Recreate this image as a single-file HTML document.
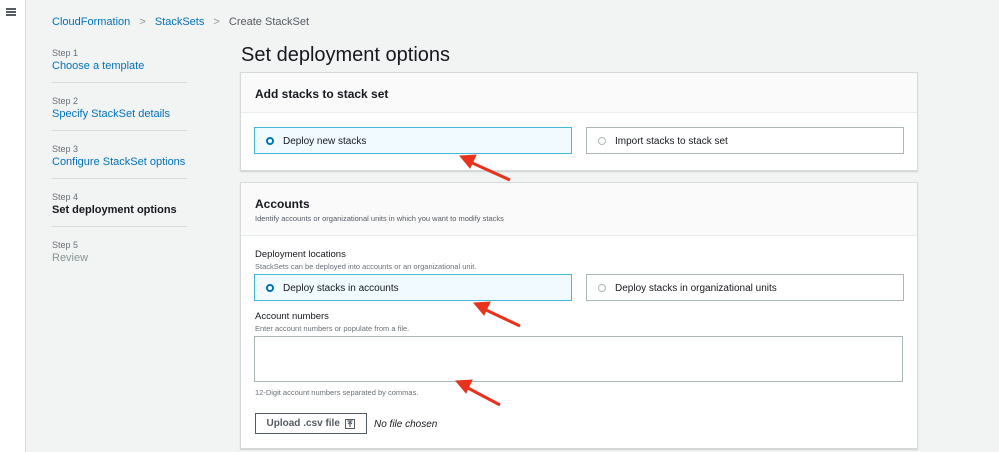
<!DOCTYPE html><html><head><style>
body{margin:0;width:999px;height:452px;background:#f2f3f3;font-family:"Liberation Sans",Arial,sans-serif;position:relative;overflow:hidden;color:#16191f}
.a{position:absolute}
.side{left:0;top:0;width:25px;height:452px;background:#fff;border-right:1px solid #d5dbdb}
.bc{font-size:11px;top:16px;left:52px;color:#0073bb}
.st{left:52px;font-size:9px;color:#687078}
.sl{left:52px;font-size:11px;color:#0073bb}
.hr{left:52px;width:135px;border-top:1px solid #d5dbdb}
.panel{left:240px;width:676px;background:#fff;border:1px solid #d5dbdb;box-shadow:0 1px 1px rgba(0,0,0,.15)}
.ph{background:#fafafa;border-bottom:1px solid #eaeded;position:absolute;left:0;right:0;top:0}
.tile{position:absolute;height:27px;border:1px solid #aab7b8;font-size:10px;box-sizing:border-box;display:flex;align-items:center;padding-left:11px;padding-top:2px}
.tile.on{background:#f1faff;border-color:#44b9d6}
.r{width:8px;height:8px;border-radius:50%;border:1px solid #aab7b8;margin-right:9px;box-sizing:border-box;margin-top:-2px}
.on .r{border:2.5px solid #0073bb;background:#fff}
</style></head><body>
<div class="a side"></div>
<div class="a" style="left:6px;top:8px;width:10px;height:2px;background:#545b64;box-shadow:0 3px 0 #545b64,0 6px 0 #545b64"></div>
<div class="a bc">CloudFormation <span style="color:#879596;margin:0 6px">&gt;</span> StackSets <span style="color:#879596;margin:0 6px">&gt;</span> <span style="color:#545b64">Create StackSet</span></div>
<div class="a st" style="top:48px">Step 1</div><div class="a sl" style="top:60px">Choose a template</div><div class="a hr" style="top:82px"></div>
<div class="a st" style="top:96px">Step 2</div><div class="a sl" style="top:108px">Specify StackSet details</div><div class="a hr" style="top:130px"></div>
<div class="a st" style="top:144px">Step 3</div><div class="a sl" style="top:156px">Configure StackSet options</div><div class="a hr" style="top:178px"></div>
<div class="a st" style="top:192px">Step 4</div><div class="a sl" style="top:204px;color:#16191f;font-weight:bold">Set deployment options</div><div class="a hr" style="top:226px"></div>
<div class="a st" style="top:240px">Step 5</div><div class="a sl" style="top:252px;color:#879596">Review</div>
<div class="a" style="left:241px;top:44px;font-size:20px">Set deployment options</div>
<div class="a panel" style="top:72px;height:97px">
<div class="ph" style="height:39px"><div class="a" style="left:14px;top:14px;font-size:12px;font-weight:bold">Add stacks to stack set</div></div>
<div class="tile on" style="left:13px;top:54px;width:318px"><span class="r"></span>Deploy new stacks</div>
<div class="tile" style="left:345px;top:54px;width:318px"><span class="r"></span>Import stacks to stack set</div>
</div>
<div class="a panel" style="top:182px;height:265px">
<div class="ph" style="height:52px"><div class="a" style="left:14px;top:14px;font-size:12px;font-weight:bold">Accounts</div><div class="a" style="left:14px;top:31px;font-size:7.5px;color:#545b64">Identify accounts or organizational units in which you want to modify stacks</div></div>
<div class="a" style="left:14px;top:66px;font-size:9.5px">Deployment locations</div>
<div class="a" style="left:14px;top:79px;font-size:7.5px;color:#687078">StackSets can be deployed into accounts or an organizational unit.</div>
<div class="tile on" style="left:13px;top:91px;width:318px"><span class="r"></span>Deploy stacks in accounts</div>
<div class="tile" style="left:345px;top:91px;width:318px"><span class="r"></span>Deploy stacks in organizational units</div>
<div class="a" style="left:14px;top:128px;font-size:9.5px">Account numbers</div>
<div class="a" style="left:14px;top:141px;font-size:7.5px;color:#687078">Enter account numbers or populate from a file.</div>
<div class="a" style="left:13px;top:153px;width:649px;height:46px;border:1px solid #aab7b8;box-sizing:border-box"></div>
<div class="a" style="left:14px;top:205px;font-size:7.5px;color:#687078">12-Digit account numbers separated by commas.</div>
<div class="a" style="left:14px;top:230px;width:112px;height:21px;border:1px solid #545b64;box-sizing:border-box;font-size:10px;font-weight:bold;color:#545b64;display:flex;align-items:center;justify-content:center">Upload .csv file&nbsp;&nbsp;<svg width="10" height="10" viewBox="0 0 10 10"><rect x="0.5" y="0.5" width="9" height="9" fill="none" stroke="#545b64"/><path d="M5 8V3M3 5l2-2 2 2M2.5 2h5" fill="none" stroke="#545b64" stroke-width="1.2"/></svg></div>
<div class="a" style="left:133px;top:236px;font-size:10px;font-style:italic">No file chosen</div>
</div>
<svg class="a" style="left:0;top:0" width="999" height="452"><g stroke="#e8321e" stroke-width="3" fill="#e8321e">
<line x1="510" y1="180" x2="470" y2="162"/><polygon points="460,156 476,155 470,168" stroke-width="1"/>
<line x1="520" y1="326" x2="484" y2="309"/><polygon points="474,303 490,302 484,315" stroke-width="1"/>
<line x1="500" y1="405" x2="466" y2="387"/><polygon points="456,381 472,380 466,393" stroke-width="1"/>
</g></svg>
</body></html>
